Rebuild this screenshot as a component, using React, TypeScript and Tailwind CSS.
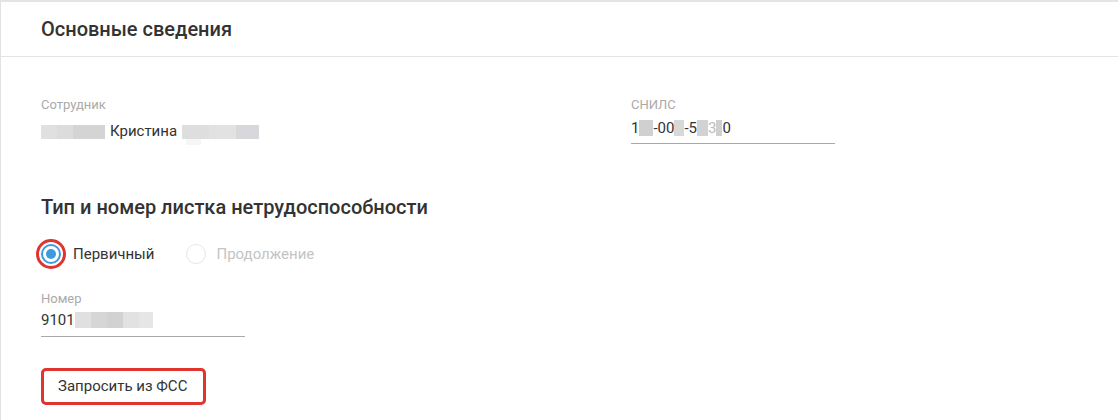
import React from "react";

const Blur = ({ w, h = 14, tone = "bg-[#d6d6d6]" }: { w: number; h?: number; tone?: string }) => (
  <span className={`inline-block align-middle ${tone}`} style={{ width: w, height: h }} />
);

export default function App() {
  return (
    <div
      className="w-[1118px] h-[420px] bg-white border-t-2 border-t-[#e4e4e4] border-l border-l-[#e2e2e2] overflow-hidden text-[#333]"
      style={{ fontFamily: "Roboto, 'Liberation Sans', sans-serif" }}
    >
      <div className="h-[55px] flex items-center pl-[40px] border-b border-[#e4e4e4]">
        <h2 className="text-[20px] font-medium text-[#333] leading-none">Основные сведения</h2>
      </div>

      <div className="pl-[40px] pt-[40px] flex">
        <div className="w-[590px]">
          <div className="text-[13px] text-[#aaa] leading-[15px]">Сотрудник</div>
          <div className="mt-[11px] flex items-center text-[15px] leading-[17px] text-[#333]">
            <span className="inline-flex">
              <Blur w={16} tone="bg-[#e0e0e0]" />
              <Blur w={16} tone="bg-[#dcdcdc]" />
              <Blur w={32} tone="bg-[#d4d4d4]" />
            </span>
            <span className="ml-[5px]">Кристина</span>
            <span className="ml-[5px] inline-flex relative">
              <Blur w={27} tone="bg-[#dedede]" />
              <Blur w={27} tone="bg-[#e2e2e2]" />
              <Blur w={23} tone="bg-[#d8d8dc]" />
              <span className="absolute left-[4px] top-[14px] w-[15px] h-[6px] bg-[#f6f6f6]" />
            </span>
          </div>
        </div>
        <div className="w-[204px]">
          <div className="text-[13px] text-[#aaa] leading-[15px]">СНИЛС</div>
          <div className="mt-[7px] pb-[6px] border-b border-[#aaa] flex items-center text-[15px] leading-[18px] text-[#333]">
            <span>1</span>
            <Blur w={14} h={16} tone="bg-[#d0d0d0]" />
            <span>-0</span>
            <span>0</span>
            <Blur w={10} h={16} tone="bg-[#d8d8d8]" />
            <span>-5</span>
            <Blur w={11} h={16} tone="bg-[#d2d2d2]" />
            <span className="text-[#bbb]">3</span>
            <Blur w={6} h={16} tone="bg-[#d0d0d0]" />
            <span>0</span>
          </div>
        </div>
      </div>

      <div className="pl-[40px] mt-[51px]">
        <h3 className="text-[20px] font-medium leading-[24px] text-[#333]">Тип и номер листка нетрудоспособности</h3>
        <div className="mt-[20px] flex items-center h-[30px] -ml-[5px]">
          <span className="w-[30px] h-[30px] rounded-full border-[3px] border-[#e0342f] flex items-center justify-center">
            <span className="w-[20px] h-[20px] rounded-full border-2 border-[#3d9bdb] flex items-center justify-center">
              <span className="w-[10px] h-[10px] rounded-full bg-[#3d9bdb]" />
            </span>
          </span>
          <span className="ml-[7px] text-[15px] text-[#333]">Первичный</span>
          <span className="ml-[32px] w-[20px] h-[20px] rounded-full border border-[#e6e6e6]" />
          <span className="ml-[10px] text-[15px] text-[#c4c4c4]">Продолжение</span>
        </div>

        <div className="mt-[22px] w-[204px]">
          <div className="text-[13px] text-[#aaa] leading-[15px]">Номер</div>
          <div className="mt-[5px] pb-[7px] border-b border-[#aaa] flex items-center text-[15px] leading-[18px] text-[#333]">
            <span>9101</span>
            <span className="inline-flex">
              <Blur w={16} h={16} tone="bg-[#e0e0e0]" />
              <Blur w={16} h={16} tone="bg-[#d6d6d6]" />
              <Blur w={16} h={16} tone="bg-[#d2d2d2]" />
              <Blur w={16} h={16} tone="bg-[#e2e2e2]" />
              <Blur w={14} h={16} tone="bg-[#e6e6e6]" />
            </span>
          </div>
        </div>

        <button className="mt-[31px] w-[165px] h-[37px] rounded-[5px] border-[3px] border-[#e0342f] bg-white text-left pl-[14px] text-[15px] text-[#333]">
          Запросить из ФСС
        </button>
      </div>
    </div>
  );
}
